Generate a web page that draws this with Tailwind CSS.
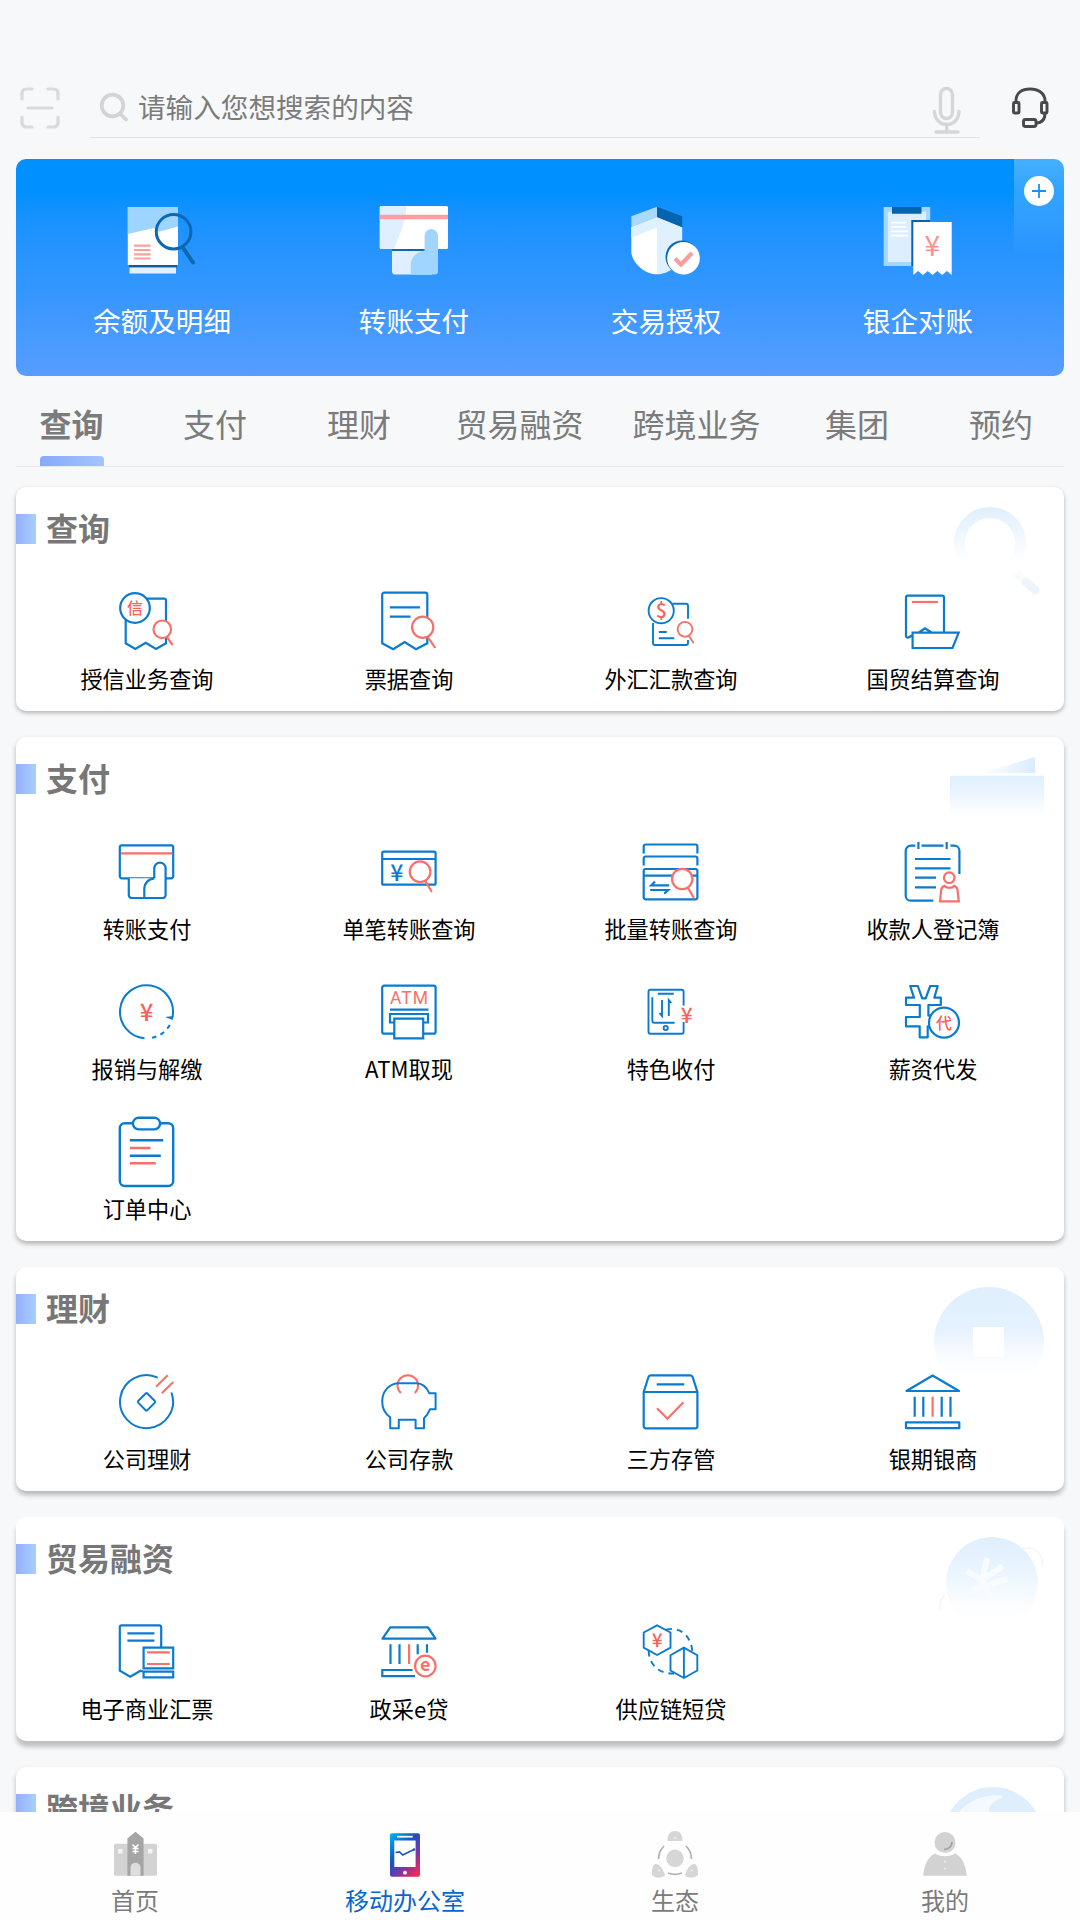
<!DOCTYPE html>
<html lang="zh-CN">
<head>
    <meta charset="UTF-8">
    <meta name="viewport" content="width=device-width, initial-scale=1.0">
    <title>移动办公室</title>
    <script src="https://cdn.jsdelivr.net/npm/@tailwindcss/browser@4"></script>
</head>
<body class="h-[1920px] w-[1080px] overflow-hidden bg-[#f6f8fa] font-['Noto_Sans_CJK_SC',sans-serif] text-black flex flex-col">
    <!-- Shared gradients -->
    <svg width="0" height="0" class="absolute">
        <defs>
            <linearGradient id="fade" x1="0" y1="0" x2="0" y2="1">
                <stop offset="0" stop-color="#dfeffe"/>
                <stop offset="0.4" stop-color="#e6f2fe"/>
                <stop offset="0.9" stop-color="#ffffff" stop-opacity="0"/>
            </linearGradient>
            <linearGradient id="fadeFast" x1="0" y1="0" x2="0" y2="1">
                <stop offset="0" stop-color="#dfeffd"/>
                <stop offset="0.35" stop-color="#e9f4fe"/>
                <stop offset="0.75" stop-color="#fbfdff"/>
                <stop offset="1" stop-color="#ffffff" stop-opacity="0"/>
            </linearGradient>
            <linearGradient id="fadeRing" gradientUnits="userSpaceOnUse" x1="0" y1="0" x2="0" y2="64">
                <stop offset="0" stop-color="#e0effd"/>
                <stop offset="0.4" stop-color="#eef6fe"/>
                <stop offset="0.85" stop-color="#ffffff"/>
            </linearGradient>
            <linearGradient id="fadeSide" x1="1" y1="0" x2="0" y2="0">
                <stop offset="0" stop-color="#d9ebfd"/>
                <stop offset="1" stop-color="#ffffff"/>
            </linearGradient>
            <linearGradient id="phone" x1="0" y1="0" x2="0.8" y2="1">
                <stop offset="0" stop-color="#00b4ee"/>
                <stop offset="0.45" stop-color="#1b4fc0"/>
                <stop offset="0.7" stop-color="#7a35a8"/>
                <stop offset="1" stop-color="#ee2a55"/>
            </linearGradient>
        </defs>
    </svg>

    <div class="flex-1 min-h-0 overflow-hidden">
        <!-- Search bar -->
        <header class="flex h-[159px] items-start pt-[76px] pl-5">
            <svg class="mt-[11px] h-[42px] w-10" viewBox="0 0 40 42" fill="none" stroke="#d9dadc" stroke-width="3.200" stroke-linecap="round">
                <path d="M2 12V6a4 4 0 0 1 4-4h6M28 2h6a4 4 0 0 1 4 4v6M38 30v6a4 4 0 0 1-4 4h-6M12 40H6a4 4 0 0 1-4-4v-6M8 21h24"/>
            </svg>
            <div class="ml-[30px] flex h-[62px] w-[890px] items-center border-b border-[#e1e3e9] pl-[9px]">
                <svg class="h-8 w-8" viewBox="0 0 32 32" fill="none" stroke="#d3d4d6" stroke-width="3.800" stroke-linecap="round">
                    <circle cx="13.500" cy="14.500" r="10.800"/><path d="M21.500 23l5.500 5.500"/>
                </svg>
                <span class="ml-[7px] text-[27.6px] text-[#7b7b7b]">请输入您想搜索的内容</span>
                <svg class="mt-[7px] ml-auto mr-[18px] h-[50px] w-[30px]" viewBox="0 0 30 50" fill="none" stroke="#d5d6d8" stroke-width="3.400" stroke-linecap="round">
                    <rect x="8.500" y="3.500" width="12" height="30" rx="6"/>
                    <path d="M2.500 26.500a12.200 13 0 0 0 24.500 0M14.700 40v7M4 47h22"/>
                </svg>
            </div>
            <svg class="mt-[9px] ml-[31px] h-[44px] w-10" viewBox="0 0 40 44" fill="none" stroke="#47494c" stroke-width="2.900" stroke-linejoin="round">
                <path d="M5 17v-1C5 8 11 4 19 4S34 8 34 16v1M34 28c0 7-3 10-9 10"/>
                <rect x="2.500" y="17.500" width="5.500" height="10.500" rx="1"/><rect x="30.500" y="17.500" width="5.500" height="10.500" rx="1"/>
                <rect x="12.500" y="34.500" width="12.500" height="7" rx="2"/>
            </svg>
        </header>

        <!-- Shortcut banner -->
        <section class="relative mx-4 h-[217px] overflow-hidden rounded-[10px] bg-linear-to-b from-[#0090ff] from-15% via-[#3396ff] via-60% to-[#569dff] px-5">
            <div class="absolute top-0 right-0 h-24 w-[50px] bg-linear-to-b from-white/28 to-white/0"></div>
            <div class="absolute top-[17px] right-[10px] flex h-[30px] w-[30px] items-center justify-center rounded-full bg-white">
                <svg class="h-4 w-4" viewBox="0 0 16 16" stroke="#1590f8" stroke-width="1.800"><path d="M8 1v14M1 8h14"/></svg>
            </div>
            <div class="grid grid-cols-4 pt-[45px] text-white">
                <a class="flex flex-col items-center">
                    <svg class="h-[72px] w-[72px]" viewBox="0 0 72 72">
                        <path fill="#fff" d="M1.800 3H52v58H1.800z"/>
                        <path fill="#9dd5ff" d="M1.800 3H52v19.500L33 27.800 28 24 1.800 30z"/>
                        <path fill="#0b5ea6" d="M3 61h48v2.500H3z"/><path fill="#e2f1ff" d="M3.500 63.500H50v6H3.500z"/>
                        <path stroke="#f9a19e" stroke-width="2.200" d="M8 41.700h16.500M8 46h16.500M8 50.300h16.500M8 54.500h16.500"/>
                        <circle cx="47.600" cy="27.700" r="17.300" fill="none" stroke="#0c68b3" stroke-width="3"/>
                        <path stroke="#0c68b3" stroke-width="4" stroke-linecap="round" d="M57.500 44.500l9.500 14"/>
                    </svg>
                    <span class="mt-[22px] text-[27.6px] leading-[44px]">余额及明细</span>
                </a>
                <a class="flex flex-col items-center">
                    <svg class="h-[72px] w-[72px]" viewBox="0 0 72 72">
                        <rect x="1.800" y="2" width="68.200" height="43" rx="1.500" fill="#fff"/>
                        <path fill="#dfefff" d="M3 2h25.500c-1 17-7 29-12.500 43H3c-1 0-1.200-.5-1.200-1.500v-40C1.800 2.500 2 2 3 2z"/>
                        <path fill="#fb9f9f" d="M1.800 10.700H70v4.600H1.800z"/>
                        <path fill="#0b69b5" d="M14 45h34v2.500H14z"/>
                        <path fill="#dfefff" d="M14 47h40v23.500H17a3 3 0 0 1-3-3z"/>
                        <path fill="#9fd5ff" d="M46.600 46.500V31.700a6.700 6.700 0 0 1 13.400 0V67.500a3 3 0 0 1-3 3H32.800V61c0-7 4-12 13.800-14.500z"/>
                    </svg>
                    <span class="mt-[22px] text-[27.6px] leading-[44px]">转账支付</span>
                </a>
                <a class="flex flex-col items-center">
                    <svg class="h-[72px] w-[72px]" viewBox="0 0 72 72">
                        <path fill="#fff" d="M27 13L1.300 23v26C3 59 14 70.300 27 70.300z"/>
                        <path fill="#dff0ff" d="M27 13l25.200 10V50C50 61 39 70.300 27 70.300zM27 13L1.300 23v11L27 23.500z"/>
                        <path fill="#a9d9ff" d="M27 2.700L1.300 12.300V23L27 13z"/>
                        <path fill="#0663ad" d="M27 2.700l25.200 9.600v11L27 13z"/>
                        <circle cx="52" cy="53" r="16.500" fill="#0b69b5"/>
                        <circle cx="53.500" cy="54.300" r="16.300" fill="#fff"/>
                        <path fill="none" stroke="#fb9c9c" stroke-width="4.200" d="M45 54.500l6 6 11-11.500"/>
                    </svg>
                    <span class="mt-[22px] text-[27.6px] leading-[44px]">交易授权</span>
                </a>
                <a class="flex flex-col items-center">
                    <svg class="h-[72px] w-[72px]" viewBox="0 0 72 72">
                        <path fill="#a3d7ff" d="M1.700 3h46.500v59H1.700z"/><path fill="#dceeff" d="M5.800 7.700H44V58H5.800z"/>
                        <path fill="#0663ad" d="M10 3h29.500v6.700H10zM29.300 16h19v46h-19z"/>
                        <path stroke="#fff" stroke-width="1.800" d="M9.200 18.700H24M9.200 22.900h15M9.200 27.300h17M9.200 31.700h17"/>
                        <path fill="#fff" d="M31.300 18h38.400v53l-4.800-4-4.800 4-4.800-4-4.800 4-4.800-4-4.800 4-4.800-4-4.800 4z"/>
                        <text x="50.300" y="52.300" font-size="28" text-anchor="middle" fill="#fb928f">¥</text>
                    </svg>
                    <span class="mt-[22px] text-[27.6px] leading-[44px]">银企对账</span>
                </a>
            </div>
        </section>

        <!-- Category tabs -->
        <nav class="mx-4 flex h-[91px] border-b border-[#e6e9ed] text-[32px] leading-[48px] text-[#7b7b7b]">
            <a class="-ml-4 flex w-[143px] shrink-0 flex-col items-center pt-[23px] font-bold">查询
                <span class="mt-[9px] h-[10px] w-16 rounded-t bg-linear-to-r from-[#86aafa] to-[#a5c4fd]"></span>
            </a>
            <a class="w-36 shrink-0 pt-[23px] text-center">支付</a>
            <a class="w-36 shrink-0 pt-[23px] text-center">理财</a>
            <a class="w-[177px] shrink-0 pt-[23px] text-center">贸易融资</a>
            <a class="w-[177px] shrink-0 pt-[23px] text-center">跨境业务</a>
            <a class="w-36 shrink-0 pt-[23px] text-center">集团</a>
            <a class="w-36 shrink-0 pt-[23px] text-center">预约</a>
        </nav>

        <main class="mt-5 flex flex-col gap-[26px] px-4">
            <!-- 查询 -->
            <section class="relative h-[224px] rounded-[10px] bg-white shadow-[0_2px_4px_rgba(0,0,0,0.28)]">
                <svg class="absolute top-5 right-5 h-28 w-28" viewBox="0 0 112 112" fill="none">
                    <circle cx="58" cy="36" r="30.500" stroke="url(#fadeRing)" stroke-width="11"/>
                    <path stroke="#f7fbfe" stroke-width="8" d="M84 66l8 8"/><path stroke="#edf4fc" stroke-width="9" stroke-linecap="round" d="M94 75l9 8"/>
                </svg>
                <h2 class="flex h-[99px] items-start pt-[27px] text-[32px] leading-[26px] font-bold text-[#777]">
                    <span class="mr-[10px] h-[30px] w-5 bg-linear-to-r from-[#96affc] to-[#a8cffe]"></span>查询
                </h2>
                <div class="relative grid grid-cols-4 text-[22.2px] leading-7">
                    <a class="flex h-[140px] flex-col items-center">
                        <svg class="mb-[6px] h-[72px] w-[60px]" viewBox="0 0 60 72" fill="none" stroke="#0b7bd0" stroke-width="2.200">
                            <path d="M30 12.700h17a2 2 0 0 1 2 2v42.600L39 63l-10.300-6.300L18.300 63l-9.600-5.700V34"/>
                            <circle cx="18" cy="22" r="14.800" fill="#fff"/>
                            <g stroke="#f9706a"><circle cx="45.300" cy="43.300" r="8.800" fill="#fff"/><path d="M49.700 50.700l5.800 8.300"/></g>
                            <text x="18" y="27.800" font-size="16" font-weight="500" text-anchor="middle" fill="#f9625b" stroke="none">信</text>
                        </svg>授信业务查询
                    </a>
                    <a class="flex h-[140px] flex-col items-center">
                        <svg class="mb-[6px] h-[72px] w-[60px]" viewBox="0 0 60 72" fill="none" stroke="#0b7bd0" stroke-width="2.200">
                            <path d="M3.200 57.300V8.700a2 2 0 0 1 2-2h41.100a2 2 0 0 1 2 2v48.600L37 63.300 25.600 56l-11.400 7.300zM10.800 21.300H41M10.800 30.700h20.700"/>
                            <g stroke="#f9706a"><circle cx="43.700" cy="41.300" r="10.600" fill="#fff"/><path d="M49 51.300l7.300 10.700"/></g>
                        </svg>票据查询
                    </a>
                    <a class="flex h-[140px] flex-col items-center">
                        <svg class="mb-[6px] h-[72px] w-[60px]" viewBox="0 0 60 72" fill="none" stroke="#0b7bd0" stroke-width="1.900">
                            <path d="M31.500 17.700H45a2 2 0 0 1 2 2v13M47 54v3a2 2 0 0 1-2 2H14a2 2 0 0 1-2-2V37M17.800 46h8M17.800 52.300h15.500"/>
                            <circle cx="20.200" cy="24.700" r="12.600" fill="#fff"/>
                            <g stroke="#f9706a"><circle cx="44" cy="43.300" r="7.400" fill="#fff"/><path d="M48 50l4.600 7"/></g>
                            <text x="20.200" y="31.700" font-size="19.500" font-weight="500" text-anchor="middle" fill="#f9625b" stroke="none">$</text>
                        </svg>外汇汇款查询
                    </a>
                    <a class="flex h-[140px] flex-col items-center">
                        <svg class="mb-[6px] h-[72px] w-[60px]" viewBox="0 0 60 72" fill="none" stroke="#0b7bd0" stroke-width="2.200">
                            <path d="M41 46.700v-35a2 2 0 0 0-2-2H5a2 2 0 0 0-2 2V50c0 1.700 2 2 3.500 1l3-2M15.800 46.500L22 42.300l6.500 4.200M9.600 46.700h46.100L49.500 62H9.600z"/>
                            <path stroke="#f9706a" d="M8.900 16H35"/>
                        </svg>国贸结算查询
                    </a>
                </div>
            </section>

            <!-- 支付 -->
            <section class="relative h-[504px] rounded-[10px] bg-white shadow-[0_3px_5px_rgba(0,0,0,0.28)]">
                <svg class="absolute top-5 right-5 h-28 w-28" viewBox="0 0 112 112">
                    <path fill="url(#fadeSide)" d="M50 16L103 0v16z"/><path fill="url(#fadeFast)" d="M18 18.700h94v46H18z"/>
                </svg>
                <h2 class="flex h-[99px] items-start pt-[27px] text-[32px] leading-[26px] font-bold text-[#777]">
                    <span class="mr-[10px] h-[30px] w-5 bg-linear-to-r from-[#96affc] to-[#a8cffe]"></span>支付
                </h2>
                <div class="relative grid grid-cols-4 text-[22.2px] leading-7">
                    <a class="flex h-[140px] flex-col items-center">
                        <svg class="mb-[6px] h-[72px] w-[60px]" viewBox="0 0 60 72" fill="none" stroke="#0b7bd0" stroke-width="2.200">
                            <rect x="2.800" y="9.300" width="53.400" height="33" rx="2"/>
                            <path stroke="#f9706a" d="M3.800 17.300h51.400"/>
                            <path fill="#fff" d="M11.800 42.300V59a3 3 0 0 0 3 3h30.800a3 3 0 0 0 3-3V32.300a5.650 5.650 0 0 0-11.300 0v10"/>
                            <path d="M37.300 42.300c-6 .5-10 5-10 11v9"/>
                        </svg>转账支付
                    </a>
                    <a class="flex h-[140px] flex-col items-center">
                        <svg class="mb-[6px] h-[72px] w-[60px]" viewBox="0 0 60 72" fill="none" stroke="#0b7bd0" stroke-width="2.200">
                            <rect x="3.200" y="15.700" width="53.400" height="33" rx="1.500"/><path d="M3.200 23h53.400"/>
                            <g stroke="#f9706a"><circle cx="41.100" cy="35.700" r="10.300" fill="#fff"/><path d="M46.300 45l6.500 11"/></g>
                            <text x="17.700" y="45" font-size="23" font-weight="500" text-anchor="middle" fill="#0b7bd0" stroke="none">¥</text>
                        </svg>单笔转账查询
                    </a>
                    <a class="flex h-[140px] flex-col items-center">
                        <svg class="mb-[6px] h-[72px] w-[60px]" viewBox="0 0 60 72" fill="none" stroke="#0b7bd0" stroke-width="2.200">
                            <path d="M2.700 17.500v-7a2 2 0 0 1 2-2h49.700a2 2 0 0 1 2 2v7M2.700 29.500v-7a2 2 0 0 1 2-2h49.700a2 2 0 0 1 2 2v7"/>
                            <rect x="2.700" y="33" width="53.700" height="30.300" rx="2"/>
                            <path d="M2.700 39.700h53.700M14 45.500l-3.800 3.800h18M9.200 54h18l-4 3.600"/>
                            <g stroke="#f9706a"><circle cx="41.200" cy="43" r="10.200" fill="#fff"/><path d="M46.800 51.700L53 62"/></g>
                        </svg>批量转账查询
                    </a>
                    <a class="flex h-[140px] flex-col items-center">
                        <svg class="mb-[6px] h-[72px] w-[60px]" viewBox="0 0 60 72" fill="none" stroke="#0b7bd0" stroke-width="2.200">
                            <path d="M30.300 64.700H7.700a5 5 0 0 1-5-5v-45a5 5 0 0 1 5-5h4.600M18.500 9.700h22M47.500 9.700h3.900a5 5 0 0 1 5 5V38M15.400 6v7M43.700 6v7M12 23h35.500M12 32.300h35.500M12 41.700h21M12 51.300h21"/>
                            <g stroke="#f9706a"><circle cx="46.200" cy="41.700" r="5.300"/><path d="M41.500 49.800c-2.300.7-3 2.200-3.300 4.200l-1.200 11.300h18.800L54.500 54c-.3-2-1.100-3.500-3.400-4.200-1.300 2.600-8 2.600-9.600 0z"/></g>
                        </svg>收款人登记簿
                    </a>
                    <a class="flex h-[140px] flex-col items-center">
                        <svg class="mb-[6px] h-[72px] w-[60px]" viewBox="0 0 60 72" fill="none" stroke="#0b7bd0" stroke-width="2">
                            <path d="M27.500 62.200A26.500 26.500 0 1 1 55.500 41"/>
                            <path stroke-dasharray="4.500 4.500" d="M52.800 49A26.500 26.500 0 0 1 32 62.200"/>
                            <path fill="#0b7bd0" stroke="none" d="M48 41l8.500-1-.8 4z"/>
                            <text x="29.500" y="44.500" font-size="24" font-weight="500" text-anchor="middle" fill="#f9625b" stroke="none">¥</text>
                        </svg>报销与解缴
                    </a>
                    <a class="flex h-[140px] flex-col items-center">
                        <svg class="mb-[6px] h-[72px] w-[60px]" viewBox="0 0 60 72" fill="none" stroke="#0b7bd0" stroke-width="2.200">
                            <path d="M15.300 57.700H5.200a2 2 0 0 1-2-2v-44a2 2 0 0 1 2-2h49.400a2 2 0 0 1 2 2v44a2 2 0 0 1-2 2H44.200M11 33.700h38.400M15.300 46.500H11V38h38v8.500h-4.800"/>
                            <path d="M15.300 42.600h28.900v19.700H15.300z"/>
                            <text x="30" y="28.200" font-size="17.500" textLength="38" text-anchor="middle" fill="#f9706a" stroke="none" font-family="Roboto">ATM</text>
                        </svg>ATM取现
                    </a>
                    <a class="flex h-[140px] flex-col items-center">
                        <svg class="mb-[6px] h-[72px] w-[60px]" viewBox="0 0 60 72" fill="none" stroke="#0b7bd0" stroke-width="1.900">
                            <path d="M42.600 29.500V15.700a2 2 0 0 0-2-2H9.500a2 2 0 0 0-2 2v40a2 2 0 0 0 2 2h31.100a2 2 0 0 0 2-2V46M16.800 17.700h16M11.300 21.300v23.400a2 2 0 0 0 2 2h20.300M21 24v16l-2.500-3M27.800 40V24l2.500 3"/>
                            <circle cx="24.700" cy="52" r="2.100"/>
                            <text x="45.700" y="47.300" font-size="21" font-weight="500" text-anchor="middle" fill="#f9625b" stroke="none">¥</text>
                        </svg>特色收付
                    </a>
                    <a class="flex h-[140px] flex-col items-center">
                        <svg class="mb-[6px] h-[72px] w-[60px]" viewBox="0 0 60 72" fill="none" stroke="#0b7bd0" stroke-width="2.200" stroke-linejoin="round">
                            <path d="M7.200 10h7.600l4.400 12.300h3.500L27.200 10h7.500l-3.400 11.700h6.500V29H25.400v10.700H33v10.600h-8.300v11h-8V50.300H3V41h13.800V29H3v-7.300h8z"/>
                            <circle cx="41" cy="46.700" r="15" fill="#fff"/>
                            <text x="41" y="52.500" font-size="16" font-weight="500" text-anchor="middle" fill="#f9625b" stroke="none">代</text>
                        </svg>薪资代发
                    </a>
                    <a class="flex h-[125px] flex-col items-center">
                        <svg class="mb-[6px] h-[72px] w-[60px]" viewBox="0 0 60 72" fill="none" stroke="#0b7bd0" stroke-width="2.400">
                            <rect x="2.800" y="7.200" width="53.400" height="62.800" rx="5"/>
                            <rect x="15.900" y="1.800" width="27.200" height="11.600" rx="5.800" fill="#fff"/>
                            <path d="M12.800 24.300h33.400M12.800 39.700h31"/><path stroke="#f9706a" d="M12.800 32h20.700M12.800 47.300h26"/>
                        </svg>订单中心
                    </a>
                </div>
            </section>

            <!-- 理财 -->
            <section class="relative h-[224px] rounded-[10px] bg-white shadow-[0_4px_5px_rgba(0,0,0,0.26)]">
                <svg class="absolute top-5 right-5 h-28 w-28" viewBox="0 0 112 112">
                    <circle cx="57" cy="55" r="55" fill="url(#fade)"/><path fill="#fff" d="M41 40h31v30H41z"/>
                </svg>
                <h2 class="flex h-[99px] items-start pt-[27px] text-[32px] leading-[26px] font-bold text-[#777]">
                    <span class="mr-[10px] h-[30px] w-5 bg-linear-to-r from-[#96affc] to-[#a8cffe]"></span>理财
                </h2>
                <div class="relative grid grid-cols-4 text-[22.2px] leading-7">
                    <a class="flex h-[125px] flex-col items-center">
                        <svg class="mb-[6px] h-[72px] w-[60px]" viewBox="0 0 60 72" fill="none" stroke="#0b7bd0" stroke-width="2">
                            <path d="M40.700 11.600A26.500 26.500 0 1 0 54.400 26.500"/>
                            <rect x="23" y="29.300" width="13" height="13" rx="1.500" transform="rotate(45 29.500 35.800)"/>
                            <path stroke="#f9706a" d="M39 20.700L50.700 9.300M44.800 27.300L56.200 16"/>
                        </svg>公司理财
                    </a>
                    <a class="flex h-[125px] flex-col items-center">
                        <svg class="mb-[6px] h-[72px] w-[60px]" viewBox="0 0 60 72" fill="none" stroke="#0b7bd0" stroke-width="2" stroke-linejoin="round">
                            <path stroke="#f9706a" d="M21.800 27a10.300 10.300 0 1 1 14 0"/>
                            <path d="M20 17.200h17.400c6 0 10.500 4.500 13 10.100h6.200v16H51c-1.500 3.500-3.500 6.500-6 9v10h-8.400v-8.600H19.800v8.600h-8.600V51.300C6 47.500 3.200 42 3.200 35.700 3.200 25 10.500 17.200 20 17.200z"/>
                        </svg>公司存款
                    </a>
                    <a class="flex h-[125px] flex-col items-center">
                        <svg class="mb-[6px] h-[72px] w-[60px]" viewBox="0 0 60 72" fill="none" stroke="#0b7bd0" stroke-width="2.200">
                            <path d="M2.700 26L7.300 11.500c.5-1.500 1.200-2.200 2.700-2.200h39c1.500 0 2.300.7 2.800 2.200L56.400 26v34.300a2 2 0 0 1-2 2H4.700a2 2 0 0 1-2-2zh53.700M15.700 18.300h27.600"/>
                            <path stroke="#f9706a" d="M16 42.300l10.400 10.400 16-16.400"/>
                        </svg>三方存管
                    </a>
                    <a class="flex h-[125px] flex-col items-center">
                        <svg class="mb-[6px] h-[72px] w-[60px]" viewBox="0 0 60 72" fill="none" stroke="#0b7bd0" stroke-width="2.200" stroke-linejoin="round">
                            <path d="M3.500 25L29.600 9.500 56 25zM11.700 30.700v20M20.300 30.700v20M38.700 30.700v20M47.500 30.700v20M3 56.300h53.300v5.900H3z"/>
                            <path stroke="#f9706a" d="M29.600 30.700v20"/>
                        </svg>银期银商
                    </a>
                </div>
            </section>

            <!-- 贸易融资 -->
            <section class="relative h-[224px] rounded-[10px] bg-white shadow-[0_6px_4px_rgba(0,0,0,0.22)]">
                <svg class="absolute top-5 right-5 h-28 w-28" viewBox="0 0 112 112">
                    <circle cx="60" cy="46" r="46" fill="url(#fadeFast)"/>
                    <path fill="none" stroke="#f8fbff" stroke-width="6" stroke-linejoin="round" d="M35 34l15 9 5-22M50 43l21-14M38 54l38-12M50 43l12 22"/>
                    <path fill="none" stroke="#f0f5fb" stroke-width="1.500" d="M90 12c12-4 22 4 20 18M9 72c-2-6 0-10 4-14"/>
                </svg>
                <h2 class="flex h-[99px] items-start pt-[27px] text-[32px] leading-[26px] font-bold text-[#777]">
                    <span class="mr-[10px] h-[30px] w-5 bg-linear-to-r from-[#96affc] to-[#a8cffe]"></span>贸易融资
                </h2>
                <div class="relative grid grid-cols-4 text-[22.2px] leading-7">
                    <a class="flex h-[125px] flex-col items-center">
                        <svg class="mb-[6px] h-[72px] w-[60px]" viewBox="0 0 60 72" fill="none" stroke="#0b7bd0" stroke-width="2.200">
                            <path d="M44.200 31.500V11.300a2 2 0 0 0-2-2H4.800a2 2 0 0 0-2 2v43.400l10.400 6 10.300-6 3 1M10.400 17.300h27M10.400 24.700h27M26.600 31.700h29.600v20.600H26.600zM26.600 55.700h29.600v5.600H26.600z"/>
                            <path stroke="#f9706a" d="M30 36.300h22.800M30 48h22.800"/>
                        </svg>电子商业汇票
                    </a>
                    <a class="flex h-[125px] flex-col items-center">
                        <svg class="mb-[6px] h-[72px] w-[60px]" viewBox="0 0 60 72" fill="none" stroke="#0b7bd0" stroke-width="2.200">
                            <path stroke-linejoin="round" d="M3.500 22.700l7.700-11.400H49l7.500 11.400z"/>
                            <path d="M11.500 28.300V48M20.500 28.300V48M38.700 28.300v10M48 28.300v8.500M33.500 54H3.300v6.200H36"/>
                            <g stroke="#f9706a"><path d="M30.100 28.300V48"/><circle cx="46.300" cy="50" r="10.300" fill="#fff"/></g>
                            <text x="46.300" y="55.300" font-size="18" font-weight="700" text-anchor="middle" fill="#f9706a" stroke="none">e</text>
                        </svg>政采e贷
                    </a>
                    <a class="flex h-[125px] flex-col items-center">
                        <svg class="mb-[6px] h-[72px] w-[60px]" viewBox="0 0 60 72" fill="none" stroke="#0b7bd0" stroke-width="1.900">
                            <path stroke-dasharray="6 5" d="M25 13.700C38 10 51 19 51.500 38M7.600 34.500C8 48 17 58 33 57.500"/>
                            <path fill="#fff" d="M16.100 9.300l13.400 7.200v15.200L16.100 39 2.700 31.700V16.500zM42.900 31.700l13.400 7.500v15.300L42.900 62l-13.400-7.500V39.200zV62"/>
                            <text x="16.100" y="31.200" font-size="19" font-weight="500" text-anchor="middle" fill="#f9625b" stroke="none">¥</text>
                        </svg>供应链短贷
                    </a>
                </div>
            </section>

            <!-- 跨境业务 -->
            <section class="relative h-[224px] shrink-0 rounded-[10px] bg-white shadow-[0_3px_5px_rgba(0,0,0,0.26)]">
                <svg class="absolute top-5 right-5 h-28 w-28" viewBox="0 0 112 112">
                    <circle cx="61" cy="49.500" r="49.500" fill="#dfeefd"/>
                    <path fill="#f4f9fe" d="M20 36C28 18 44 9 66 8c4 0 6 2 3 3-8 3-12 7-12 14 0 6 6 3 8 11H20z"/>
                </svg>
                <h2 class="flex h-[99px] items-start pt-[27px] text-[32px] leading-[26px] font-bold text-[#777]">
                    <span class="mr-[10px] h-[30px] w-5 bg-linear-to-r from-[#96affc] to-[#a8cffe]"></span>跨境业务
                </h2>
            </section>
        </main>
    </div>

    <!-- Bottom navigation -->
    <footer class="relative grid h-[108px] shrink-0 grid-cols-4 bg-[#fefefe] pt-[18px] text-2xl leading-8 text-[#7b7b7b]">
        <a class="flex flex-col items-center">
            <svg class="mb-[6px] h-12 w-12" viewBox="0 0 48 48">
                <rect x="3" y="13.700" width="43" height="32" rx="1.500" fill="#d3d3d3"/>
                <path fill="#a5a5a5" d="M16.400 45.700V8.500l8-6.700 8.200 6.700v37.200z"/>
                <path fill="#dedede" d="M19.500 45.700v-8a5 5 0 0 1 10 0v8z"/>
                <path stroke="#fff" stroke-width="1.600" fill="none" d="M21.500 14.500l3 3 3-3M24.400 17v7M21.500 18.500h6M21.500 21.500h6"/>
                <path fill="#f4f4f4" d="M7 19h4.500v4.500H7zM37 19h4.500v4.500H37z"/>
            </svg>首页
        </a>
        <a class="flex flex-col items-center text-[#0a66cc]">
            <svg class="mb-[6px] h-12 w-12" viewBox="0 0 48 48">
                <rect x="9" y="3.300" width="30" height="43.500" rx="2" fill="url(#phone)"/>
                <path fill="#fff" d="M13.300 10.500h21.300V37H13.300z"/><circle cx="24" cy="42.700" r="1.900" fill="#fff"/>
                <path stroke="#fff" stroke-width="1.700" d="M16 6.700h15.700"/>
                <path fill="none" stroke="#1c56c4" stroke-width="1.700" d="M14.500 22.500l4-.5 3.200 3L33 19.500"/><circle cx="33" cy="19.500" r="1.300" fill="#1c56c4"/>
            </svg>移动办公室
        </a>
        <a class="flex flex-col items-center">
            <svg class="mb-[6px] h-12 w-12" viewBox="0 0 48 48" fill="#d6d6d6">
                <circle cx="24" cy="28.300" r="8.700"/>
                <path d="M16.500 11c0-6 2-10 7.500-10s7.500 4 7.500 10zM4 34c4-1 9 6 10 11-3 4-10 3-13 0 0-5 0-9 3-11zM44 34c-4-1-9 6-10 11 3 4 10 3 13 0 0-5 0-9-3-11z"/>
                <path fill="none" stroke="#b2b2b2" stroke-width="1.700" d="M13 16c-4 4-5.500 8-5.500 13M35 16c4 4 5.500 8 5.500 13M17 43c5 2 9 2 14 0"/>
                <path stroke="#f0f0f0" stroke-width="1.500" d="M22.500 8h3M7 40.500h2M39.500 40.500h2"/>
            </svg>生态
        </a>
        <a class="flex flex-col items-center">
            <svg class="mb-[6px] h-12 w-12" viewBox="0 0 48 48">
                <circle cx="24" cy="12.500" r="10.500" fill="#d2d2d2"/>
                <path fill="#d2d2d2" d="M2.300 45.700C3 34 8 26 14 23.500c5 3.500 15 3.500 20 0 6 2.500 11 10.500 11.700 22.200z"/>
                <path fill="none" stroke="#9e9e9e" stroke-width="1.600" d="M31 12c0 4-3 7.500-8 7.500"/>
                <path stroke="#f0f0f0" stroke-width="1.500" d="M23.200 31.500h1.600M23.200 38.500h1.600"/>
            </svg>我的
        </a>
    </footer>
</body>
</html>
